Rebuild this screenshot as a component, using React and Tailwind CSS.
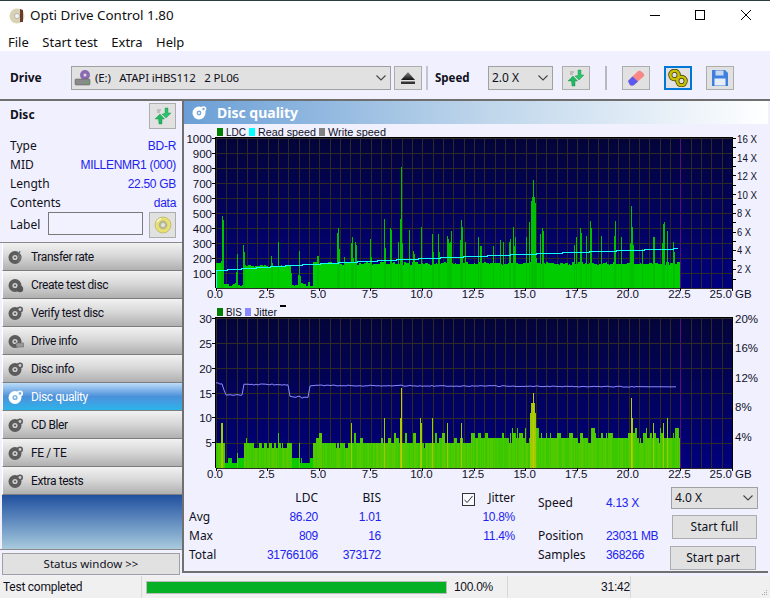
import React from "react";

const FONT = '"Noto Sans", "Open Sans", sans-serif';
const CHART_FONT = '"Liberation Sans", Arial, sans-serif';
const X0 = 216, X1 = 732, PX = (X1 - X0) / 25, END = 680;

function rng(seed) {
  let s = seed;
  return () => {
    s = (s + 0x6d2b79f5) | 0;
    let t = Math.imul(s ^ (s >>> 15), 1 | s);
    t = (t + Math.imul(t ^ (t >>> 7), 61 | t)) ^ t;
    return ((t ^ (t >>> 14)) >>> 0) / 4294967296;
  };
}

const LDC_SPIKES = {221:180,222:480,223:455,236:110,237:230,243:285,244:240,271:215,272:170,278:310,291:100,299:250,300:80,317:215,318:215,337:370,338:400,339:260,344:210,351:300,352:340,353:200,355:305,356:290,370:330,371:210,384:460,385:270,390:400,391:390,398:310,400:460,401:810,402:300,409:390,413:250,414:230,421:410,432:360,433:240,438:360,439:240,447:350,448:330,449:300,450:310,451:380,460:320,461:455,462:410,465:310,478:340,480:280,481:280,493:280,500:320,503:310,509:310,510:330,513:410,514:280,515:340,526:340,529:440,531:580,532:610,533:720,534:610,535:570,536:200,540:360,542:400,543:380,574:290,576:340,580:400,581:370,586:350,590:450,591:400,601:350,614:350,615:450,621:340,630:300,631:550,632:410,633:290,642:260,653:340,654:340,662:300,663:430,664:440,667:380,673:310,674:240};

const BIS_SPIKES = {221:9,222:9,237:3,278:7,299:5,351:9,384:10,400:10,401:16,420:10,421:9,432:10,447:9,461:9,530:11,531:13,532:13,533:15,534:13,535:11,631:14,632:10,667:10,653:9,663:9};

function seg(x) {
  const g = (x - X0) / PX;
  if (g < 0.35) return 0;
  if (g < 1.3) return 1;
  if (g < 3.6) return 2;
  if (g < 4.6) return 1;
  return 3;
}

const ldcBars = (() => {
  const r = rng(11), out = [];
  let hold = 0, cur = 0;
  for (let x = X0; x < END; x++) {
    const s = seg(x);
    if (hold <= 0) {
      hold = 1 + Math.floor(r() * 3);
      if (s === 0) cur = 150 + r() * 28;
      else if (s === 1) cur = r() < 0.12 ? 60 + r() * 40 : 12 + r() * 26;
      else if (s === 2) cur = 142 + r() * 14;
      else cur = 155 + r() * 20;
    }
    hold--;
    out.push([x, LDC_SPIKES[x] || cur]);
  }
  return out;
})();

const bisBars = (() => {
  const r = rng(29), out = [];
  let hold = 0, cur = 0;
  for (let x = X0; x < END; x++) {
    const s = seg(x);
    if (hold <= 0) {
      hold = 1 + Math.floor(r() * 3);
      const q = r();
      if (s === 0) cur = q < 0.6 ? 5 : 6;
      else if (s === 1) cur = q < 0.65 ? 2 : 1;
      else if (s === 2) cur = q < 0.5 ? 5 : q < 0.9 ? 4 : 6;
      else if (x < 470) cur = q < 0.08 ? 4 : q < 0.72 ? 5 : q < 0.9 ? 6 : 7;
      else cur = q < 0.06 ? 5 : q < 0.62 ? 6 : q < 0.9 ? 7 : 8;
    }
    hold--;
    out.push([x, BIS_SPIKES[x] || cur, r()]);
  }
  return out;
})();

function bisColor(v, n) {
  if (v >= 14) return "#c8c800";
  if (v >= 9) return "#9ccc00";
  if (v <= 2) return "#0ccc00";
  return n < 0.25 ? "#5ac800" : n < 0.6 ? "#3cc800" : "#48cc00";
}

const READ_STEPS = [[216,270],[227,269.3],[241,268.3],[256,267.3],[270,266.3],[285,265.3],[302,264.3],[320,263.3],[338,262.3],[357,261.3],[377,260.3],[396,259.3],[418,258.3],[440,257.3],[463,256.3],[487,255.3],[510,254.3],[536,253.3],[562,252.3],[589,251.3],[616,250.3],[644,249.3],[673,248.3],[678,248.3]];
const readPts = READ_STEPS.map(([x, y], i) => (i ? `${x},${READ_STEPS[i - 1][1]} ${x},${y}` : `${x},${y}`)).join(" ");

const jitterPts = (() => {
  const r = rng(7), pts = [];
  for (let x = X0; x <= 676; x += 2) {
    const g = (x - X0) / PX;
    let y;
    if (g < 0.35) y = 383.5;
    else if (g < 0.4) y = 390;
    else if (g < 1.35) y = 395;
    else if (g < 3.58) y = 384.5;
    else if (g < 4.55) y = 397.5;
    else y = 385.5 + (x - 340) * 0.004;
    const amp = g > 3.58 && g < 4.55 ? 2.6 : g < 4.6 ? 1.3 : x > 640 ? 0.1 : 1;
    y += (r() - 0.5) * amp;
    pts.push(`${x},${y.toFixed(1)}`);
  }
  return pts.join(" ");
})();

function AxisText({ x, y, anchor = "start", size = 11.5, len, children }) {
  return (
    <text x={x} y={y} textAnchor={anchor} fontSize={size} fill="#101028" fontFamily={CHART_FONT} textLength={len} lengthAdjust={len ? "spacingAndGlyphs" : undefined}>
      {children}
    </text>
  );
}

function Plot({ id, top, bottom, rows }) {
  const step = (bottom - top) / rows;
  return (
    <>
      <defs>
        <linearGradient id={id} x1="0" y1="0" x2="0" y2="1">
          <stop offset="0" stopColor="#04043a" />
          <stop offset="1" stopColor="#00007e" />
        </linearGradient>
      </defs>
      <rect x={X0} y={top} width={X1 - X0} height={bottom - top} fill={`url(#${id})`} />
      {Array.from({ length: 51 }, (_, i) => (
        <line key={i} x1={Math.round(X0 + i * 10.32) + 0.5} x2={Math.round(X0 + i * 10.32) + 0.5} y1={top} y2={bottom} stroke={i === 45 ? "#5a0f78" : "#2e2a26"} />
      ))}
      {Array.from({ length: rows + 1 }, (_, i) => (
        <line key={i} x1={X0} x2={X1} y1={Math.round(top + i * step) + 0.5} y2={Math.round(top + i * step) + 0.5} stroke="#2e2a26" />
      ))}
    </>
  );
}

function Frame({ top, bottom }) {
  return <path d={`M215.5 ${bottom} V${top - 0.5} H732.5 V${bottom + 1}`} fill="none" stroke="#000" strokeWidth="1.4" />;
}

function XLabels({ y }) {
  const vals = ["0.0", "2.5", "5.0", "7.5", "10.0", "12.5", "15.0", "17.5", "20.0", "22.5"];
  return (
    <>
      {vals.map((v, i) => (
        <AxisText key={v} x={X0 + i * 2.5 * PX - 1} y={y} anchor="middle">{v}</AxisText>
      ))}
      <AxisText x={732} y={y} anchor="end">25.0</AxisText>
      <AxisText x={735} y={y}>GB</AxisText>
    </>
  );
}

function Chart1() {
  const ys = [1000, 900, 800, 700, 600, 500, 400, 300, 200, 100];
  const rights = [["16 X", 143], ["14 X", 162], ["12 X", 180], ["10 X", 199], ["8 X", 217], ["6 X", 236], ["4 X", 254], ["2 X", 273]];
  return (
    <svg className="block" width="584" height="178" viewBox="184 125 584 178" shapeRendering="crispEdges">
      <rect x="217" y="128" width="6" height="8" fill="#008000" />
      <AxisText x={226} y={136} len={20}>LDC</AxisText>
      <rect x="249" y="128" width="6" height="8" fill="#00ffff" />
      <AxisText x={258} y={136} len={58}>Read speed</AxisText>
      <rect x="319" y="128" width="6" height="8" fill="#808080" />
      <AxisText x={328} y={136} len={58}>Write speed</AxisText>
      <Plot id="g1" top={138} bottom={288} rows={10} />
      {ldcBars.map(([x, v]) => (
        <rect key={x} x={x} y={288 - v * 0.15} width="1" height={v * 0.15} fill={LDC_SPIKES[x] ? "#00c000" : "#00cc00"} />
      ))}
      <polyline points={readPts} fill="none" stroke="#1ff" strokeWidth="1" />
      <line x1="216.5" x2="216.5" y1="270" y2="288" stroke="#1ff" />
      <Frame top={138} bottom={288} />
      {ys.map((v, i) => (
        <g key={v}>
          <AxisText x={212} y={143 + i * 15} anchor="end">{v}</AxisText>
          <line x1="212" x2="215" y1={138.5 + i * 15} y2={138.5 + i * 15} stroke="#000" />
        </g>
      ))}
      {Array.from({ length: 16 }, (_, i) => (
        <line key={i} x1="733" x2="736" y1={Math.round(138 + i * 9.37) + 0.5} y2={Math.round(138 + i * 9.37) + 0.5} stroke="#000" />
      ))}
      {rights.map(([t, y]) => (
        <AxisText key={t} x={737} y={y} len={t.length === 4 ? 20 : 14}>{t}</AxisText>
      ))}
      {Array.from({ length: 11 }, (_, i) => (
        <line key={i} x1={X0 + i * 5 * 10.32} x2={X0 + i * 5 * 10.32} y1="288" y2="291" stroke="#000" />
      ))}
      <XLabels y={298} />
    </svg>
  );
}

function Chart2() {
  const ys = [[30, 323], [25, 348], [20, 373], [15, 398], [10, 422], [5, 447]];
  const rights = [["20%", 323], ["16%", 352], ["12%", 382], ["8%", 411], ["4%", 441]];
  return (
    <svg className="block" width="584" height="179" viewBox="184 303 584 179" shapeRendering="crispEdges">
      <rect x="217" y="308" width="6" height="8" fill="#008000" />
      <AxisText x={226} y={316} len={16}>BIS</AxisText>
      <rect x="245" y="308" width="6" height="8" fill="#8888ff" />
      <AxisText x={254} y={316} len={23}>Jitter</AxisText>
      <rect x="280" y="305" width="6" height="2" fill="#000" />
      <Plot id="g2" top={318} bottom={468} rows={6} />
      {bisBars.map(([x, v, n]) => (
        <rect key={x} x={x} y={468 - v * 4.97} width="1" height={v * 4.97} fill={bisColor(v, n)} />
      ))}
      <polyline points={jitterPts} fill="none" stroke="#8a8aff" strokeWidth="1" shapeRendering="auto" />
      <Frame top={318} bottom={468} />
      {ys.map(([v, y]) => (
        <g key={v}>
          <AxisText x={212} y={y} anchor="end">{v}</AxisText>
          <line x1="212" x2="215" y1={y - 4.5} y2={y - 4.5} stroke="#000" />
        </g>
      ))}
      {rights.map(([t, y]) => (
        <AxisText key={t} x={735} y={y}>{t}</AxisText>
      ))}
      {Array.from({ length: 11 }, (_, i) => (
        <line key={i} x1={X0 + i * 5 * 10.32} x2={X0 + i * 5 * 10.32} y1="468" y2="471" stroke="#000" />
      ))}
      <XLabels y={478} />
    </svg>
  );
}

function Chevron() {
  return (
    <svg width="10" height="6" viewBox="0 0 10 6" className="shrink-0">
      <path d="M0.5 0.5 L5 5 L9.5 0.5" fill="none" stroke="#444" strokeWidth="1.1" />
    </svg>
  );
}

function RefreshIcon() {
  return (
    <svg width="18" height="18" viewBox="0 0 18 18">
      <path d="M3 3 H7 M3 5 H6" stroke="#9a9a9a" strokeWidth="1" />
      <path d="M11 1 L14 1 L14 6 L17 6 L12 11 L8 7 L11 6.5 Z" fill="#2cc36b" stroke="#0d8a45" strokeWidth="0.4" />
      <path d="M5 17 L8 17 L8 12 L10.5 12 L6 7 L1 12 L4.5 12 Z" fill="#22b862" stroke="#0d8a45" strokeWidth="0.4" />
    </svg>
  );
}

function ToolBtn({ children, focus, className = "" }) {
  return (
    <div className={`flex h-6 w-7 shrink-0 items-center justify-center bg-[#e1e1e1] ${focus ? "border-2 border-[#0078d7]" : "border border-[#adadad]"} ${className}`}>
      {children}
    </div>
  );
}

function NavIcon({ active, kind }) {
  const main = active ? "#ffffff" : "#5c5c5c";
  const hole = active ? "#7db6e8" : "#cfcfcf";
  return (
    <svg width="16" height="16" viewBox="0 0 16 16" className="shrink-0">
      <circle cx="7" cy="8.5" r="6.5" fill={main} />
      <circle cx="7" cy="8.5" r="2.6" fill={hole} />
      <circle cx="7" cy="8.5" r="1.1" fill={main} />
      {kind === "rate" ? (
        <path d="M12 2 L10 8 L12.5 8 L10.5 13" fill="none" stroke="#777" strokeWidth="1.3" />
      ) : kind === "create" ? (
        <circle cx="12" cy="12" r="3.2" fill="#555" />
      ) : kind === "drive" ? (
        <rect x="8" y="10" width="7.5" height="4" fill="#999" stroke="#666" strokeWidth="0.6" />
      ) : (
        <>
          <circle cx="12" cy="4.5" r="3" fill={main} />
          <circle cx="12" cy="4.5" r="1.4" fill={hole} />
        </>
      )}
    </svg>
  );
}

const NAV = [
  ["Transfer rate", "rate"], ["Create test disc", "create"], ["Verify test disc", "x"], ["Drive info", "drive"],
  ["Disc info", "x"], ["Disc quality", "x", true], ["CD Bler", "x"], ["FE / TE", "x"], ["Extra tests", "x"],
];

function NavButton({ label, kind, active }) {
  return (
    <div className={`flex h-7 items-center gap-[7px] border-b border-b-[#7d7d7d] border-l border-l-white pl-[5px] ${active ? "bg-gradient-to-b from-[#bcdcf8] via-[#4a90da] to-[#28b4ea] text-white" : "bg-gradient-to-b from-[#f2f2f2] via-[#d6d6d6] to-[#b0b0b0] text-[#101020]"}`}>
      <NavIcon active={active} kind={kind} />
      <span className="font-['Roboto'] text-[12px] tracking-[-0.4px]">{label}</span>
    </div>
  );
}

const NUM = "font-['Liberation_Sans'] text-[12px] tracking-[-0.3px] text-[#2222ee]";

function InfoRow({ k, v }) {
  return (
    <div className="flex h-[19px] items-center justify-between pl-[10px] pr-[6px] text-[12px]">
      <span className="text-[#101020]">{k}</span>
      <span className={NUM}>{v}</span>
    </div>
  );
}

function Sidebar() {
  return (
    <div className="flex w-[182px] shrink-0 flex-col">
      <div className="flex h-[142px] flex-col border-b border-b-[#8a8a8a]">
        <div className="flex h-[35px] items-start justify-between pl-[10px] pr-[6px] pt-[2px]">
          <span className="mt-[3px] text-[12px] font-bold text-[#101020]">Disc</span>
          <ToolBtn className="h-[26px] w-[27px]"><RefreshIcon /></ToolBtn>
        </div>
        <InfoRow k="Type" v="BD-R" />
        <InfoRow k="MID" v="MILLENMR1 (000)" />
        <InfoRow k="Length" v="22.50 GB" />
        <InfoRow k="Contents" v="data" />
        <div className="flex items-start pl-[10px] text-[12px] text-[#101020]">
          <span className="mt-[4px] w-[38px]">Label</span>
          <div className="h-[23px] w-[95px] border border-[#7a7a7a] bg-[#f2f2ff]" />
          <ToolBtn className="ml-[6px] h-[26px] w-[27px]">
            <svg width="18" height="18" viewBox="0 0 18 18">
              <circle cx="9" cy="9" r="8" fill="#e8e070" stroke="#a8a860" strokeWidth="0.6" />
              <circle cx="9" cy="9" r="4.4" fill="#b8b890" />
              <circle cx="9" cy="9" r="2" fill="#e4e4e4" />
              <path d="M3 6 A7 7 0 0 1 7 2.5" stroke="#fff" strokeWidth="1.2" fill="none" />
            </svg>
          </ToolBtn>
        </div>
      </div>
      <div className="ml-[2px] flex flex-col">
        {NAV.map(([l, k, a]) => (
          <NavButton key={l} label={l} kind={k} active={a} />
        ))}
      </div>
      <div className="ml-[2px] h-[54px] bg-gradient-to-b from-[#21509f] to-[#a9cbdd]" />
      <div className="flex flex-1 flex-col border-t border-t-[#8a8a8a] pl-[2px] pt-[3px]">
        <div className="flex h-[22px] w-[178px] items-center justify-center border border-[#a0a0a0] bg-[#e1e1e1] text-[11.5px] text-[#101020]">Status window &gt;&gt;</div>
      </div>
    </div>
  );
}

function Stats() {
  const cell = "flex h-[19px] items-center";
  return (
    <div className="relative flex h-[88px] pl-[5px] pt-[6px] text-[12px] text-[#101020]">
      <div className="w-[60px]">
        <div className={cell} />
        <div className={cell}>Avg</div>
        <div className={cell}>Max</div>
        <div className={cell}>Total</div>
      </div>
      <div className="w-[69px] text-right">
        <div className={`${cell} justify-end`}>LDC</div>
        <div className={`${cell} justify-end ${NUM}`}>86.20</div>
        <div className={`${cell} justify-end ${NUM}`}>809</div>
        <div className={`${cell} justify-end ${NUM}`}>31766106</div>
      </div>
      <div className="w-[63px]">
        <div className={`${cell} justify-end`}>BIS</div>
        <div className={`${cell} justify-end ${NUM}`}>1.01</div>
        <div className={`${cell} justify-end ${NUM}`}>16</div>
        <div className={`${cell} justify-end ${NUM}`}>373172</div>
      </div>
      <div className="w-[134px]">
        <div className={`${cell} justify-between pl-[81px]`}>
          <div className="mt-[4px] flex h-[13px] w-[13px] items-center justify-center border border-[#333] bg-[#f8f8ff]">
            <svg width="11" height="11" viewBox="0 0 11 11"><path d="M1.5 6 L4.2 8.5 L9.5 2" fill="none" stroke="#333" strokeWidth="1" /></svg>
          </div>
          <span className="mt-[1px]">Jitter</span>
        </div>
        <div className={`${cell} justify-end ${NUM}`}>10.8%</div>
        <div className={`${cell} justify-end ${NUM}`}>11.4%</div>
      </div>
      <div className="ml-[23px] w-[68px]">
        <div className="flex h-[25px] items-end pb-[1px]">Speed</div>
        <div className="h-[13px]" />
        <div className={cell}>Position</div>
        <div className={cell}>Samples</div>
      </div>
      <div className="w-[64px]">
        <div className={`flex h-[25px] items-end pb-[1px] ${NUM}`}>4.13 X</div>
        <div className="h-[13px]" />
        <div className={`${cell} ${NUM}`}>23031 MB</div>
        <div className={`${cell} ${NUM}`}>368266</div>
      </div>
      <div className="-mt-[1px] flex w-[90px] flex-col">
        <div className="ml-[1px] flex h-[22px] w-[87px] items-center justify-between border border-[#a0a0a0] bg-[#e1e1e1] pl-[3px] pr-[4px]">
          <span>4.0 X</span><Chevron />
        </div>
        <div className="ml-[2px] mt-[6px] flex h-[24px] w-[85px] items-center justify-center border border-[#adadad] bg-[#e1e1e1]">Start full</div>
        <div className="mt-[7px] flex h-[24px] w-[86px] items-center justify-center border border-[#adadad] bg-[#e1e1e1]">Start part</div>
      </div>
    </div>
  );
}

export default function App() {
  return (
    <div className="flex h-[598px] w-[770px] flex-col overflow-hidden bg-[#f0f0fe]" style={{ fontFamily: FONT }}>
      <div className="flex h-[34px] items-center border-t border-t-[#2c3e44] bg-white pb-[4px] pl-[9px]">
        <svg width="17" height="17" viewBox="0 0 17 17">
          <circle cx="8" cy="9" r="7.5" fill="#d8d2b4" />
          <circle cx="8" cy="9" r="2.5" fill="#f4f4f4" stroke="#888" strokeWidth="0.5" />
          <path d="M11 2 L14 3 L14 15 L11 15 Z" fill="#6a3a2a" />
        </svg>
        <span className="ml-[4px] text-[13.4px] text-[#101010]">Opti Drive Control 1.80</span>
        <svg width="120" height="20" viewBox="0 0 120 20" className="ml-auto -mt-[2px]">
          <path d="M0 10.5 H10" stroke="#000" />
          <rect x="45.5" y="5.5" width="9" height="9" fill="none" stroke="#000" />
          <path d="M91 5 L101 15 M101 5 L91 15" stroke="#000" />
        </svg>
      </div>
      <div className="flex h-[17px] items-center gap-[13.5px] bg-white pl-[8px] text-[13px] text-[#101010]">
        <span>File</span><span>Start test</span><span>Extra</span><span>Help</span>
      </div>
      <div className="flex h-[50px] items-center border-b-2 border-b-[#6f6f6f] pt-[5px] text-[12px] text-[#101020]">
        <span className="ml-[10px] w-[61px] font-bold">Drive</span>
        <div className="flex h-6 w-[320px] items-center border border-[#a0a0a0] bg-[#e1e1e1] pl-[2px] pr-[4px]">
          <svg width="18" height="18" viewBox="0 0 18 18" className="shrink-0">
            <circle cx="11" cy="6" r="5" fill="#8a6ab0" />
            <circle cx="11" cy="6" r="1.5" fill="#ddd" />
            <rect x="1" y="10" width="15" height="6" rx="1" fill="#8a8a8a" stroke="#555" strokeWidth="0.5" />
            <rect x="12" y="13" width="2" height="1.5" fill="#3c3" />
          </svg>
          <span className="ml-[3px] whitespace-pre text-[11.5px] tracking-[-0.15px]">(E:)   ATAPI iHBS112   2 PL06</span>
          <span className="ml-auto"><Chevron /></span>
        </div>
        <ToolBtn className="ml-[3px]">
          <svg width="16" height="14" viewBox="0 0 16 14">
            <defs><linearGradient id="ej" x1="0" y1="0" x2="0" y2="1"><stop offset="0" stopColor="#888" /><stop offset="1" stopColor="#111" /></linearGradient></defs>
            <path d="M8 1 L15 9 H1 Z" fill="url(#ej)" />
            <rect x="1" y="10.5" width="14" height="2.5" fill="#333" />
          </svg>
        </ToolBtn>
        <div className="ml-[4px] h-6 w-[2px] bg-[#c4c4cc]" />
        <span className="ml-[7px] w-[53px] text-[11.5px] font-bold">Speed</span>
        <div className="flex h-6 w-[65px] items-center justify-between border border-[#a0a0a0] bg-[#e1e1e1] pl-[3px] pr-[4px]">
          <span>2.0 X</span><Chevron />
        </div>
        <ToolBtn className="ml-[9px]"><RefreshIcon /></ToolBtn>
        <div className="ml-[15px] h-6 w-[2px] bg-[#b8b8c0]" />
        <ToolBtn className="ml-[15px]">
          <svg width="20" height="18" viewBox="0 0 20 18">
            <path d="M2 12 L12 2 Q14 1 16 3 L18 5 Q19 7 17 8 L8 16 Q6 17 4 16 Z" fill="#f88888" />
            <path d="M2 12 L6.5 7.5 L12 12.5 L8 16 Q6 17 4 16 Z" fill="#5a5af0" />
          </svg>
        </ToolBtn>
        <ToolBtn focus className="ml-[14px]">
          <svg width="20" height="18" viewBox="0 0 20 18">
            <circle cx="6.5" cy="6" r="4.2" fill="none" stroke="#3a3a10" strokeWidth="4" />
            <circle cx="13.5" cy="12" r="4.2" fill="none" stroke="#3a3a10" strokeWidth="4" />
            <circle cx="6.5" cy="6" r="4.2" fill="none" stroke="#c8c000" strokeWidth="2.6" />
            <circle cx="13.5" cy="12" r="4.2" fill="none" stroke="#c8c000" strokeWidth="2.6" />
          </svg>
        </ToolBtn>
        <ToolBtn className="ml-[14px]">
          <svg width="18" height="18" viewBox="0 0 18 18">
            <path d="M1 1 H14 L17 4 V17 H1 Z" fill="#3f7fe0" />
            <rect x="4.5" y="1.5" width="8" height="5" fill="#c8d8f0" />
            <rect x="3.5" y="9.5" width="11" height="7" fill="#e8eef8" />
          </svg>
        </ToolBtn>
      </div>
      <div className="flex h-[475px] shrink-0">
        <Sidebar />
        <div className="flex h-[472px] w-[586px] flex-col border-b-2 border-l-2 border-b-[#707070] border-l-[#707070]">
          <div className="flex h-[23px] items-center bg-gradient-to-r from-[#6a9fd6] via-[#bcd4ea] to-white pl-[8px]">
            <svg width="15" height="15" viewBox="0 0 15 15">
              <circle cx="7" cy="8" r="6.5" fill="#fff" />
              <circle cx="7" cy="8" r="2.4" fill="#7aa8d8" />
              <circle cx="7" cy="8" r="1" fill="#fff" />
              <circle cx="11.5" cy="4" r="2.8" fill="#fff" />
              <circle cx="11.5" cy="4" r="1.2" fill="#7aa8d8" />
            </svg>
            <span className="ml-[10px] text-[14px] font-bold text-white">Disc quality</span>
          </div>
          <div className="h-[1px]" />
          <Chart1 />
          <Chart2 />
          <Stats />
        </div>
      </div>
      <div className="relative flex flex-1 items-center bg-[#f0f0f0] text-[#101020]">
        <span className="ml-[3px] w-[138px] font-['Roboto'] text-[12px] tracking-[-0.25px]">Test completed</span>
        <div className="h-full w-[1px] bg-[#d8d8d8]" />
        <div className="ml-[4px] h-[13px] w-[301px] border border-[#bcbcbc] bg-[#06b025]" />
        <span className="ml-[7px] w-[53px] font-['Liberation_Sans'] text-[12px] tracking-[-0.3px]">100.0%</span>
        <div className="h-full w-[1px] bg-[#d8d8d8]" />
        <span className="w-[122px] text-right font-['Liberation_Sans'] text-[12px] tracking-[-0.2px]">31:42</span>
        <div className="h-full w-[1px] bg-[#d8d8d8]" />
        <svg width="7" height="7" viewBox="0 0 7 7" className="absolute bottom-[2px] right-[2px]">
          <path d="M5 1h1v1H5zM3 3h1v1H3zM5 3h1v1H5zM1 5h1v1H1zM3 5h1v1H3zM5 5h1v1H5z" fill="#a8a8a8" />
        </svg>
      </div>
    </div>
  );
}
